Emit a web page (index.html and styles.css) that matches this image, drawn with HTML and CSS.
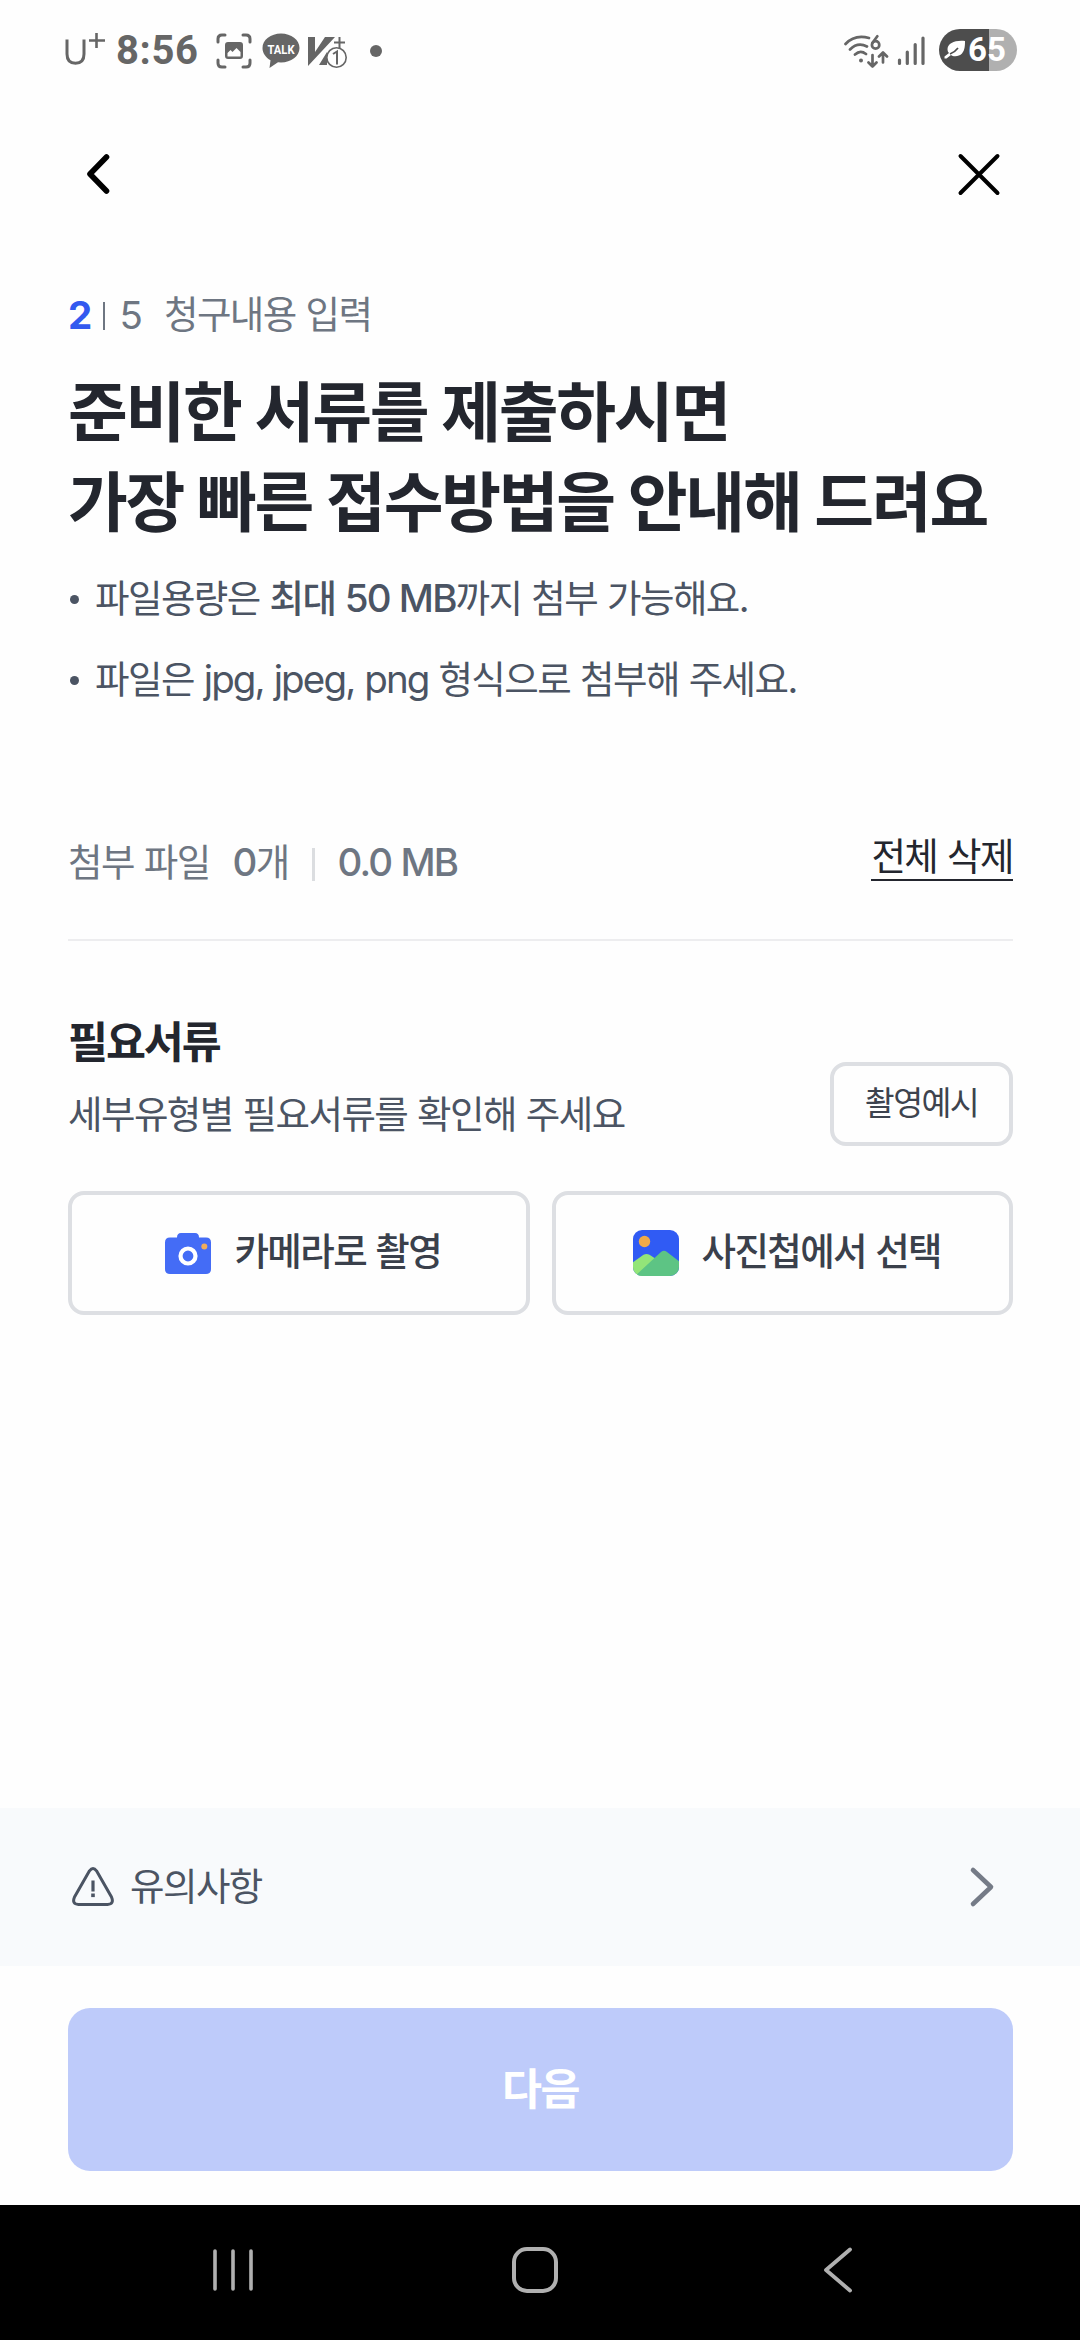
FILE: index.html
```html
<!DOCTYPE html>
<html lang="ko">
<head>
<meta charset="utf-8">
<meta name="viewport" content="width=device-width, initial-scale=1">
<title>청구내용 입력</title>
<link rel="stylesheet" href="styles.css">
</head>
<body>
<div class="screen">
  <div class="status">
    <div class="status-left">
      <svg class="carrier" width="40" height="34" viewBox="0 0 40 34" fill="none" stroke="#666"><path d="M2 6.500V21c0 6 3 9.200 8.500 9.200S19 27 19 21V6.500" stroke-width="3"/><path d="M31.500 0v15M24 7.500h16" stroke-width="2.600"/></svg>
      <span class="clock">8:56</span>
      <svg class="capture" width="36" height="36" viewBox="0 0 36 36"><g fill="none" stroke="#666" stroke-width="3" stroke-linecap="round"><path d="M2 9V6q0-4 4-4h3M27 2h3q4 0 4 4v3M34 27v3q0 4-4 4h-3M9 34H6q-4 0-4-4v-3"/></g><path fill="#666" fill-rule="evenodd" d="M12 9h12q3 0 3 3v11q0 3-3 3H12q-3 0-3-3V12q0-3 3-3Zm-.5 14.500h13v-4.500l-4-4-4 4-2-2-3 3Z"/></svg>
      <svg class="talk" width="38" height="36" viewBox="0 0 38 36"><path fill="#666" d="M19 .5C8.800.5.500 6.900.500 15c0 5.200 3.300 9.700 8 12.200L7.500 35l8.500-5.700 3 .2c10.200 0 18.500-6.400 18.500-14.500S29.200.5 19 .5Z"/><text x="19" y="20.500" text-anchor="middle" textLength="27" lengthAdjust="spacingAndGlyphs" class="talk-text">TALK</text></svg>
      <svg class="vaccine" width="42" height="36" viewBox="0 0 42 36"><path fill="#666" d="M1 3h7v15L18 3h10L1 32ZM12 31l8-13v13Z"/><path d="M32.500 3v11M27 8.500h11" stroke="#666" stroke-width="2"/><circle cx="29.500" cy="23.500" r="9.700" fill="#fff" stroke="#666" stroke-width="1.600"/><path d="M26 20l4-2.500v13" fill="none" stroke="#666" stroke-width="2"/></svg>
      <i class="dot"></i>
    </div>
    <div class="status-right">
      <svg class="wifi" width="46" height="36" viewBox="0 0 46 36" fill="none" stroke="#666" stroke-width="2.700" stroke-linecap="round" stroke-linejoin="round"><path d="M2.500 10C9 3 18 1.800 26 4M7 15.500c5-5 11-6 17-3M12 20.500c4-3.500 7-3.500 11-.5M34.300 2.300 29.400 9M29.500 21v11.500M25.500 28.500l4 4 4-4M40 28.500V18.500M36 22.500l4-4 4 4"/><circle cx="32.600" cy="10.900" r="3.700"/><circle cx="18" cy="26.500" r="2" fill="#666" stroke="none"/></svg>
      <svg class="signal" width="29" height="32" viewBox="0 0 29 32" stroke="#666" stroke-width="3.200" stroke-linecap="round"><path d="M2.500 25v3.500M10.300 17v11.500M18.200 9.500v19M26 3v25.500"/></svg>
      <div class="battery">
        <svg width="22" height="20" viewBox="0 0 22 20"><path fill="#fff" d="M21 1C11 0 4 3 3.500 9c0 2 .5 3 1.500 4L.5 16.500v2h2L7 15c2 1.800 8 2 11-1.500C21 10 21 5 21 1Z"/><path d="M6 14q5-2 8-6" stroke="#4d4d4d" stroke-width="1.600" fill="none"/></svg>
        <span>65</span>
      </div>
    </div>
  </div>

  <header class="header">
    <svg width="26" height="44" viewBox="0 0 26 44" fill="none" stroke="#000" stroke-width="5.600" stroke-linecap="round" stroke-linejoin="round"><path d="M21.500 5 5 22l16.500 17"/></svg>
    <svg width="44" height="44" viewBox="0 0 44 44" fill="none" stroke="#000" stroke-width="4" stroke-linecap="round"><path d="M3.500 4 40.500 41M40.500 4 3.500 41"/></svg>
  </header>

  <main class="main">
    <div class="step"><b class="num">2</b><i></i><span class="num total">5</span><span>청구내용 입력</span></div>
    <h1>준비한 서류를 제출하시면<br>가장 빠른 접수방법을 안내해 드려요</h1>
    <ul class="guide">
      <li><span>파일용량은 <b>최대 <span class="num">50 MB</span></b>까지 첨부 가능해요.</span></li>
      <li><span>파일은 <span class="num">jpg, jpeg, png</span> 형식으로 첨부해 주세요.</span></li>
    </ul>

    <div class="files">
      <div class="summary"><span>첨부 파일</span><span class="count"><b class="num">0</b>개</span><i></i><b class="num">0.0 MB</b></div>
      <a class="clear">전체 삭제</a>
    </div>

    <section class="docs">
      <div class="docs-head">
        <div>
          <h2>필요서류</h2>
          <p>세부유형별 필요서류를 확인해 주세요</p>
        </div>
        <button class="sample">촬영예시</button>
      </div>
      <div class="pick">
        <button>
          <svg width="48" height="48" viewBox="0 1 48 48"><path fill="#446cf6" d="M13 9.500q0-4.500 4-4.500h14q4 0 4 4.500h7q5 0 5 5V41q0 5-5 5H6q-5 0-5-5V14.500q0-5 5-5Z"/><circle cx="24" cy="28" r="7.500" fill="none" stroke="#fff" stroke-width="4.200"/><circle cx="40.300" cy="18.500" r="3" fill="#f0ad5b"/></svg>
          <span>카메라로 촬영</span>
        </button>
        <button>
          <svg width="48" height="48" viewBox="0 0 48 48"><defs><clipPath id="photo"><rect x="1" y="1" width="46" height="46" rx="9"/></clipPath></defs><g clip-path="url(#photo)"><path fill="#305bf4" d="M0 0h48v48H0Z"/><circle cx="12.500" cy="12.500" r="5.700" fill="#f0aa48"/><path fill="#93e579" d="M0 34 11.500 25.800q3-1.600 6 0L24 30v18H0Z"/><path fill="#5dc484" d="m3 47 26-24q3-2.500 6 0l13 10v15H3Z"/></g></svg>
          <span>사진첩에서 선택</span>
        </button>
      </div>
    </section>
  </main>

  <footer class="footer">
    <div class="notice">
      <svg width="44" height="42" viewBox="0 0 44 42" fill="none" stroke="#4b5463" stroke-width="3" stroke-linejoin="round"><path d="M18.500 4.800q3.500-4.500 7 0L40.500 31q3 7-4 7.500h-29q-7-.5-4-7.500Z"/><path d="M22 14.500v11" stroke-width="3.200"/><path d="M22 27.500v3.600" stroke-width="3.600"/></svg>
      <span>유의사항</span>
      <svg class="more" width="28" height="44" viewBox="0 0 28 44" fill="none" stroke="#757b87" stroke-width="4.600" stroke-linecap="round" stroke-linejoin="round"><path d="m5 5 18 17L5 39"/></svg>
    </div>
    <div class="action"><button class="next">다음</button></div>
    <nav class="nav">
      <svg width="44" height="48" viewBox="0 0 44 48" stroke="#b0b0b0" stroke-width="3.600" stroke-linecap="round"><path d="M4 5v38M22 5v38M40 5v38"/></svg>
      <svg class="home" width="48" height="48" viewBox="0 0 48 48" fill="none" stroke="#b0b0b0" stroke-width="4"><rect x="3" y="3" width="42" height="42" rx="13"/></svg>
      <svg width="32" height="48" viewBox="0 0 32 48" fill="none" stroke="#b0b0b0" stroke-width="3.800" stroke-linecap="round" stroke-linejoin="round"><path d="M28 3.500 4 24l24 20.500"/></svg>
    </nav>
  </footer>
</div>
</body>
</html>
```
FILE: styles.css
```css
* { box-sizing: border-box; }
body {
  margin: 0;
  background: #fefefe;
  font-family: Inter, "Noto Sans CJK KR", sans-serif;
  font-size: 37.5px;
  letter-spacing: -1.55px;
  word-spacing: 0.8px;
  color: #4b5463;
}
h1, h2, p, ul { margin: 0; padding: 0; }
b { font-weight: 500; }
svg { display: block; flex: none; }
button { font: inherit; letter-spacing: inherit; word-spacing: inherit; color: inherit; background: none; padding: 0; }
.num { font-size: 38.5px; letter-spacing: -0.048em; }

.screen { width: 1080px; height: 2340px; display: flex; flex-direction: column; }

.status { height: 100px; flex: none; display: flex; justify-content: space-between; padding: 0 63px 0 65px; }
.status-left, .status-right { display: flex; align-items: flex-start; }
.carrier { margin-top: 33px; }
.clock { font: 700 40px/40px Roboto, sans-serif; letter-spacing: 0.6px; color: #666; margin: 31px 0 0 11px; width: 82px; }
.capture { margin: 33px 0 0 18px; }
.talk { margin: 33px 0 0 10px; }
.talk-text { font: 700 12px Roboto, sans-serif; letter-spacing: 0; fill: #fff; }
.vaccine { margin: 34px 0 0 7px; }
.dot { width: 12px; height: 12px; border-radius: 50%; background: #666; margin: 45px 0 0 21px; }
.wifi { margin-top: 34px; }
.signal { margin: 35px 0 0 8px; }
.battery {
  width: 78px; height: 42px; margin: 29px 0 0 13px; padding-left: 5px;
  border-radius: 21px; display: flex; align-items: center;
  background: linear-gradient(90deg, #4d4d4d 50px, #b0b0b0 50px);
  font: 700 33px/42px Roboto, sans-serif; letter-spacing: 0; color: #fff;
}
.battery span { margin-left: 2px; }

.header { height: 148px; flex: none; display: flex; align-items: center; justify-content: space-between; padding: 0 79px 0 85px; }

.main { padding: 42px 67px 0 68px; }
.step { height: 50px; line-height: 50px; display: flex; align-items: center; color: #6e7682; }
.step b { color: #3359ef; font-weight: 700; }
.step i { width: 2px; height: 28px; background: #6e7682; margin: 2px 14px 0 13px; }
.step .total { margin-right: 23px; }
h1 { margin-top: 28px; font-size: 65px; line-height: 90px; font-weight: 700; letter-spacing: -2.25px; color: #23262e; white-space: nowrap; }
.guide { margin-top: 10px; list-style: none; }
.guide li { height: 81px; line-height: 81px; display: flex; align-items: center; white-space: nowrap; }
.guide li::before { content: ""; width: 9px; height: 9px; border-radius: 50%; background: #4b5463; margin: 2px 16px 0 2px; }

.files { margin-top: 115px; height: 106px; display: flex; align-items: flex-start; justify-content: space-between; border-bottom: 2px solid #ededef; }
.summary { height: 55px; display: flex; align-items: center; line-height: 55px; color: #6e7682; }
.count { margin-left: 23px; }
.summary i { width: 3px; height: 33px; background: #dbdde0; margin: 4px 23px 0 23px; }
.clear { line-height: 44px; border-bottom: 2px solid #23262e; color: #23262e; }

.docs-head { height: 205px; display: flex; align-items: flex-end; justify-content: space-between; }
h2 { font-size: 43.5px; line-height: 50px; font-weight: 700; letter-spacing: -2.1px; color: #23262e; }
.docs-head p { line-height: 50px; margin: 23px 0 6px; }
.sample, .pick button { border: 4px solid #dddfe3; border-radius: 16px; }
.sample { width: 183px; height: 84px; font-size: 32.5px; line-height: 76px; color: #3d434e; }
.pick { margin-top: 45px; display: grid; grid-template-columns: 1fr 1fr; gap: 22px; }
.pick button { height: 124px; line-height: 50px; padding-left: 8px; display: flex; align-items: center; justify-content: center; gap: 22px; font-weight: 500; letter-spacing: -1.6px; color: #3a404b; }
.pick span { margin-top: -2px; }

.footer { margin-top: auto; }
.notice { height: 158px; background: #f8fafc; display: flex; align-items: center; padding: 0 84px 0 71px; }
.notice span { margin-left: 15px; line-height: 50px; }
.more { margin-left: auto; }
.action { padding: 42px 67px 34px 68px; }
.next { display: block; width: 100%; height: 163px; border: 0; border-radius: 22px; background: #becbfa; color: #fff; font-size: 43.5px; line-height: 163px; font-weight: 700; }
.nav { height: 135px; background: #000; display: flex; align-items: center; justify-content: space-between; padding: 0 226px 6px 211px; }
.home { margin-right: 7px; }
```
